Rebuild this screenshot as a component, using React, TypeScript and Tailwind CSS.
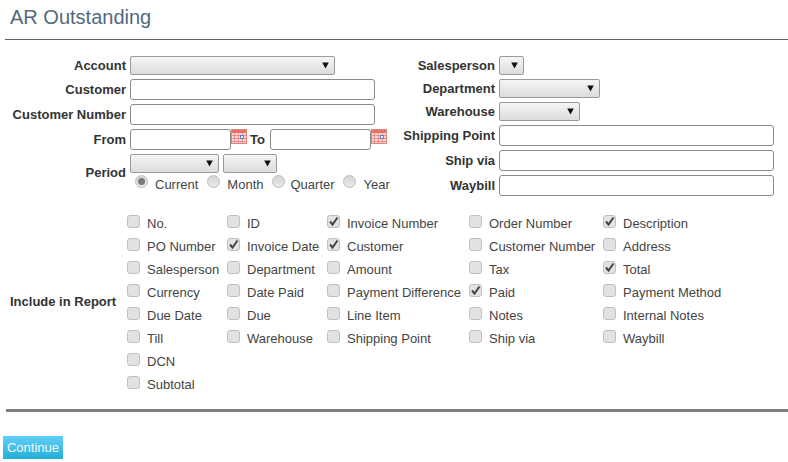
import type { ReactNode } from 'react';

// ─── Form controls ──────────────────────────────────────────────────────────

function SelectBox({ width, className = '' }: { width: string; className?: string }) {
  return (
    <div className={`flex h-[19px] items-start justify-end rounded-[2px] border border-[#9a9a9a] bg-gradient-to-b from-[#f6f6f6] to-[#dcdcdc] pr-[5px] pt-[5px] ${width} ${className}`}>
      <svg width="7" height="7" viewBox="0 0 7 7" className="block">
        <path d="M0.2 0.5H6.8L3.5 6.5Z" fill="#111" />
      </svg>
    </div>
  );
}

function TextBox({ width }: { width: string }) {
  return <div className={`h-[21px] rounded-[3px] border border-[#8a8a8a] bg-white ${width}`} />;
}

function CalendarIcon() {
  return (
    <svg width="16" height="16" viewBox="0 0 16 16" className="block shrink-0">
      <rect x="0" y="0" width="16" height="15" fill="#fad9d5" />
      <path d="M1 0.5H15" stroke="#c9584e" strokeDasharray="1 1" />
      <rect x="0" y="1" width="16" height="3" fill="#e0726a" />
      <path d="M3.5 4V15M7.5 4V15M11.5 4V15M0 6.5H16M0 9.5H16M0 12.5H16" stroke="#ea928a" strokeWidth="1" />
      <rect x="0.5" y="0.5" width="15" height="14" fill="none" stroke="#e0857d" />
      <rect x="9.5" y="6.5" width="3" height="3" fill="#fff" stroke="#5a7ce0" />
    </svg>
  );
}

function Radio({ checked = false }: { checked?: boolean }) {
  return (
    <span className="flex h-[13px] w-[13px] items-center justify-center rounded-full border border-[#bdbdbd] bg-gradient-to-b from-[#d4d4d4] to-[#e8e8e8]">
      {checked && <span className="h-[7px] w-[7px] rounded-full bg-[#7a7a7a]" />}
    </span>
  );
}

function CheckItem({ label, checked = false }: { label: string; checked?: boolean }) {
  return (
    <div className="flex h-[23px] items-start">
      <span className="mt-[-1px] flex h-[13px] w-[13px] shrink-0 items-center justify-center rounded-[3px] border border-[#c0c0c0] bg-[#e2e2e2]">
        {checked && (
          <svg width="11" height="11" viewBox="0 0 11 11" className="block">
            <path d="M2 5.5L4.5 8.5L9.5 1.5" fill="none" stroke="#444" strokeWidth="2" />
          </svg>
        )}
      </span>
      <span className="ml-[7px] whitespace-nowrap leading-[15px]">{label}</span>
    </div>
  );
}

function FieldRow({ label, labelWidth, height, children }: { label: string; labelWidth: string; height: string; children: ReactNode }) {
  return (
    <div className={`flex items-start ${height}`}>
      <div className={`shrink-0 text-right font-bold leading-[19px] text-[#333] ${labelWidth}`}>{label}</div>
      <div className="flex items-center">{children}</div>
    </div>
  );
}

// ─── Data ───────────────────────────────────────────────────────────────────

const COLUMNS: { width: string; items: { label: string; checked?: boolean }[] }[] = [
  {
    width: 'w-[100px]',
    items: [
      { label: 'No.' },
      { label: 'PO Number' },
      { label: 'Salesperson' },
      { label: 'Currency' },
      { label: 'Due Date' },
      { label: 'Till' },
      { label: 'DCN' },
      { label: 'Subtotal' },
    ],
  },
  {
    width: 'w-[100px]',
    items: [
      { label: 'ID' },
      { label: 'Invoice Date', checked: true },
      { label: 'Department' },
      { label: 'Date Paid' },
      { label: 'Due' },
      { label: 'Warehouse' },
    ],
  },
  {
    width: 'w-[142px]',
    items: [
      { label: 'Invoice Number', checked: true },
      { label: 'Customer', checked: true },
      { label: 'Amount' },
      { label: 'Payment Difference' },
      { label: 'Line Item' },
      { label: 'Shipping Point' },
    ],
  },
  {
    width: 'w-[134px]',
    items: [
      { label: 'Order Number' },
      { label: 'Customer Number' },
      { label: 'Tax' },
      { label: 'Paid', checked: true },
      { label: 'Notes' },
      { label: 'Ship via' },
    ],
  },
  {
    width: 'w-[150px]',
    items: [
      { label: 'Description', checked: true },
      { label: 'Address' },
      { label: 'Total', checked: true },
      { label: 'Payment Method' },
      { label: 'Internal Notes' },
      { label: 'Waybill' },
    ],
  },
];

// ─── Page ───────────────────────────────────────────────────────────────────

export default function App() {
  return (
    <div className="h-[462px] w-[788px] overflow-hidden bg-white font-['Liberation_Sans',Arial,sans-serif] text-[13px] text-[#444]">
      <h1 className="pl-[10px] pt-[6px] text-[20px] font-normal leading-[23px] text-[#52697c]">AR Outstanding</h1>
      <div className="ml-[5px] mt-[10px] h-px bg-[#5a6268]" />

      {/* Filters */}
      <div className="mt-[16px] flex">
        <div className="w-[391px]">
          <div className="flex h-[23px] items-start">
            <div className="w-[126px] shrink-0 text-right font-bold leading-[19px] text-[#333]">Account</div>
            <SelectBox width="w-[205px]" className="ml-[4px]" />
          </div>
          {['Customer', 'Customer Number'].map((label) => (
            <div key={label} className="flex h-[25px] items-start">
              <div className="w-[126px] shrink-0 text-right font-bold leading-[21px] text-[#333]">{label}</div>
              <div className="ml-[4px]"><TextBox width="w-[245px]" /></div>
            </div>
          ))}
          <div className="flex h-[25px] items-start">
            <div className="w-[126px] shrink-0 text-right font-bold leading-[21px] text-[#333]">From</div>
            <div className="ml-[4px]"><TextBox width="w-[101px]" /></div>
            <CalendarIcon />
            <div className="ml-[3px] w-[20px] font-bold leading-[21px] text-[#333]">To</div>
            <TextBox width="w-[101px]" />
            <CalendarIcon />
          </div>
          <div className="flex items-start">
            <div className="w-[126px] shrink-0 pt-[11px] text-right font-bold leading-[15px] text-[#333]">Period</div>
            <div className="ml-[4px]">
              <div className="flex gap-[4px]">
                <SelectBox width="w-[89px]" />
                <SelectBox width="w-[54px]" />
              </div>
              <div className="ml-[5px] mt-[2px] flex h-[17px] items-start">
                <Radio checked />
                <span className="ml-[7px] mt-[2px] leading-[15px]">Current</span>
                <span className="ml-[9px]"><Radio /></span>
                <span className="ml-[7px] mt-[2px] leading-[15px]">Month</span>
                <span className="ml-[8px]"><Radio /></span>
                <span className="ml-[6px] mt-[2px] leading-[15px]">Quarter</span>
                <span className="ml-[8px]"><Radio /></span>
                <span className="ml-[8px] mt-[2px] leading-[15px]">Year</span>
              </div>
            </div>
          </div>
        </div>

        <div>
          <FieldRow label="Salesperson" labelWidth="w-[104px]" height="h-[23px]">
            <SelectBox width="w-[25px]" className="ml-[4px]" />
          </FieldRow>
          <FieldRow label="Department" labelWidth="w-[104px]" height="h-[23px]">
            <SelectBox width="w-[101px]" className="ml-[4px]" />
          </FieldRow>
          <FieldRow label="Warehouse" labelWidth="w-[104px]" height="h-[23px]">
            <SelectBox width="w-[81px]" className="ml-[4px]" />
          </FieldRow>
          {['Shipping Point', 'Ship via', 'Waybill'].map((label) => (
            <div key={label} className="flex h-[25px] items-start">
              <div className="w-[104px] shrink-0 text-right font-bold leading-[21px] text-[#333]">{label}</div>
              <div className="ml-[4px]"><TextBox width="w-[275px]" /></div>
            </div>
          ))}
        </div>
      </div>

      {/* Report columns */}
      <div className="mt-[16px] flex items-center">
        <div className="w-[127px] shrink-0 pb-[14px] pl-[10px] font-bold leading-[15px] text-[#333]">Include in Report</div>
        <div className="flex">
          {COLUMNS.map((column) => (
            <div key={column.items[0].label} className={column.width}>
              {column.items.map((item) => (
                <CheckItem key={item.label} label={item.label} checked={item.checked} />
              ))}
            </div>
          ))}
        </div>
      </div>

      <div className="ml-[6px] mt-[9px] h-[3px] bg-[#808080]" />

      <button type="button" className="ml-[3px] mt-[24px] block h-[23px] w-[60px] bg-gradient-to-b from-[#5fcff7] to-[#1eafd8] text-center text-[13px] leading-[23px] text-[#f2fbff]">
        Continue
      </button>
    </div>
  );
}
